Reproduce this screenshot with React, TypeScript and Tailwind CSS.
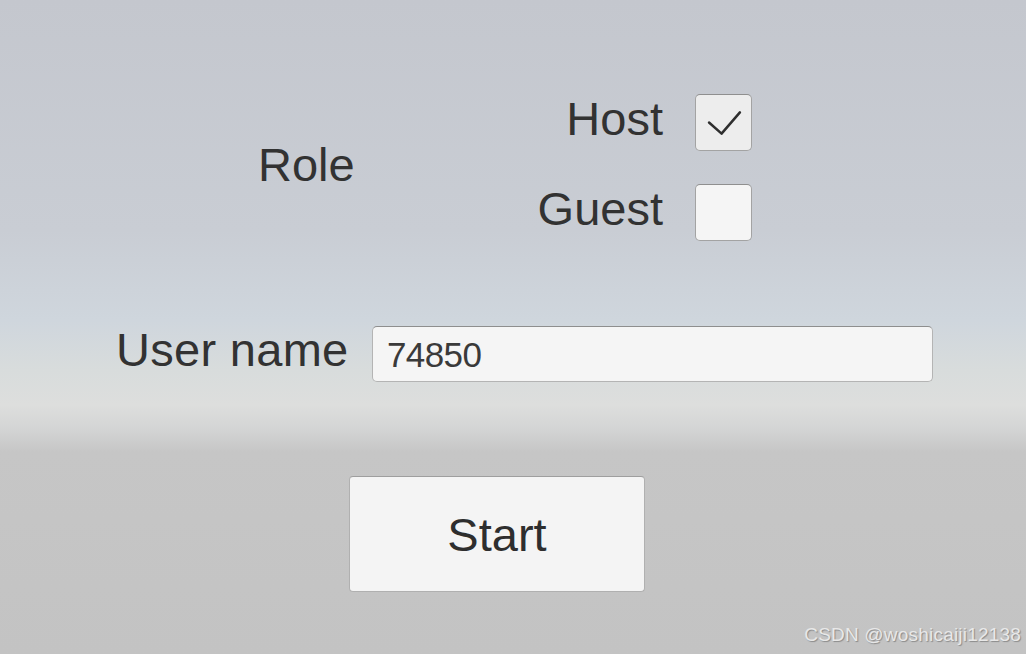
import React from "react";

function Checkbox({ checked }: { checked?: boolean }) {
  return (
    <div
      className={`flex h-[57px] w-[57px] items-center justify-center rounded-[5px] border border-[#a3a3a3] border-t-[#8f8f8f] ${
        checked ? "bg-[#ededed]" : "bg-[#f5f5f5]"
      }`}
    >
      {checked && (
        <svg width="57" height="57" viewBox="0 0 57 57" fill="none">
          <path
            d="M13.5 28.5 L26.5 40 L45.5 18"
            stroke="#2e2e2e"
            strokeWidth="2.6"
            strokeLinecap="round"
            strokeLinejoin="round"
          />
        </svg>
      )}
    </div>
  );
}

export default function App() {
  return (
    <div className="relative h-[654px] w-full overflow-hidden bg-[linear-gradient(180deg,#c4c7ce_0px,#c9cdd4_230px,#cfd6dd_320px,#d8dcdc_370px,#dddedd_405px,#d4d5d5_428px,#c6c6c6_452px,#c3c3c3_654px)] font-['Liberation_Sans',Arial,sans-serif] text-[#323232]">
      <div className="flex flex-col pt-[94px]">
        {/* Role */}
        <div className="flex w-[752px] items-center pl-[258px]">
          <span className="mb-[7px] text-[47px] leading-none">Role</span>
          <div className="ml-auto flex flex-col items-end gap-[33px]">
            <div className="flex items-center gap-[32px]">
              <span className="mb-[8px] text-[47px] leading-none">Host</span>
              <Checkbox checked />
            </div>
            <div className="flex items-center gap-[32px]">
              <span className="mb-[8px] text-[47px] leading-none">Guest</span>
              <Checkbox />
            </div>
          </div>
        </div>

        {/* User name */}
        <div className="mt-[85px] flex items-center">
          <div className="w-[372px] pl-[116px]">
            <span className="mb-[9px] block text-[47px] leading-none tracking-[0.3px]">User name</span>
          </div>
          <div className="flex h-[56px] w-[561px] items-center rounded-[5px] border border-[#b4b4b4] border-t-[#8e8e8e] bg-[#f5f5f5] pl-[14px]">
            <span className="text-[35px] leading-none tracking-[-0.6px] text-[#3a3a3a]">74850</span>
          </div>
        </div>

        {/* Start */}
        <div className="mt-[94px] pl-[349px]">
          <button className="flex h-[116px] w-[296px] items-center justify-center rounded-[4px] border border-[#b0b0b0] border-t-[#9e9e9e] bg-[#f4f4f4]">
            <span className="text-[47px] leading-none text-[#2e2e2e]">Start</span>
          </button>
        </div>
      </div>

      <div className="absolute bottom-[10px] right-[5px] text-[19px] leading-none tracking-[0.2px] text-[#e8e8e8] [text-shadow:1px_1px_1px_#8a8a8a]">
        CSDN @woshicaiji12138
      </div>
    </div>
  );
}
